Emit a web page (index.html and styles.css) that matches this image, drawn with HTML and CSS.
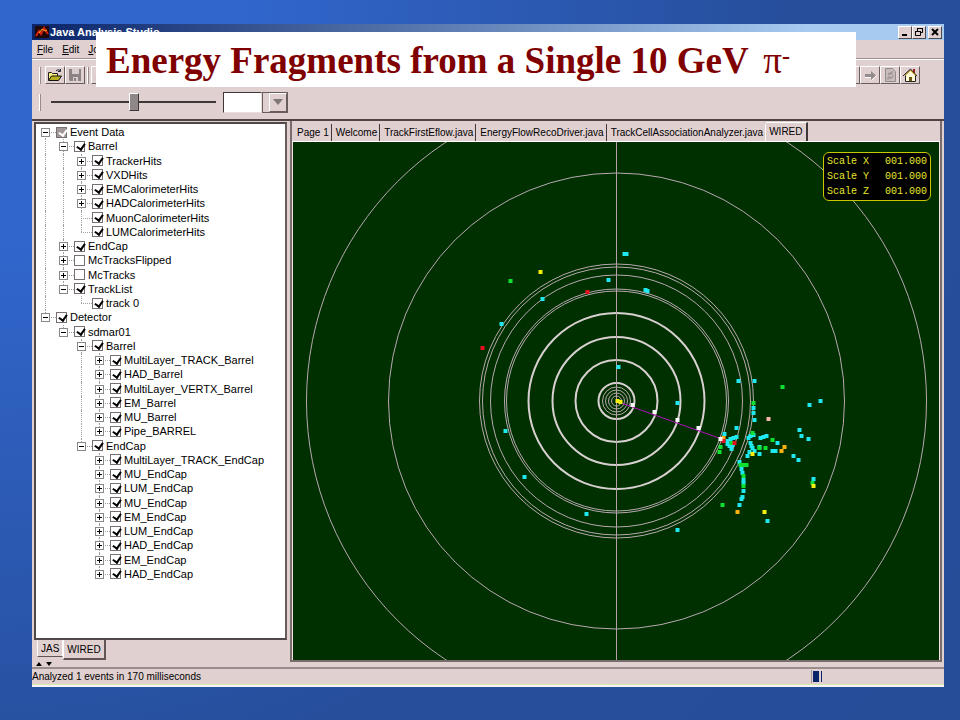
FILE: index.html
```html
<!DOCTYPE html>
<html lang="en">
<head>
  <meta charset="UTF-8">
  <meta name="viewport" content="width=device-width, initial-scale=1.0">
  <title>Energy Fragments from a Single 10 GeV π-</title>
  <link rel="stylesheet" href="styles.css">
</head>
<body>
  <h1 class="banner">Energy Fragments from a Single 10 GeV <span class="pi">π</span><sup>-</sup></h1>

  <main class="window">
    <header class="titlebar">
      <svg class="app-icon" width="14" height="12" viewBox="0 0 14 12">
        <rect width="14" height="12" fill="#200808"/>
        <path d="M1 10L4 5l2 3 3-6 4 6" fill="none" stroke="#d82010" stroke-width="2"/>
        <path d="M4 7l3-4 3 2 2-1" fill="none" stroke="#f0b020"/>
      </svg>
      <span class="title">Java Analysis Studio</span>
      <div class="controls">
        <button aria-label="Minimize"><svg width="10" height="10"><path d="M2 8h5" stroke="#000" stroke-width="2"/></svg></button>
        <button aria-label="Restore"><svg width="10" height="10"><path d="M3.500 4V1.500h5v4H7M3 1.500h6M1.500 4.500h5v4h-5zM1 4.500h6" fill="none" stroke="#000"/></svg></button>
        <button class="close" aria-label="Close"><svg width="10" height="10"><path d="M2 2l6 6M8 2L2 8" stroke="#000" stroke-width="2"/></svg></button>
      </div>
    </header>

    <nav class="menu">
      <a href="#"><u>F</u>ile</a>
      <a href="#"><u>E</u>dit</a>
      <a href="#"><u>J</u>ob</a>
    </nav>

    <div class="toolbar">
      <span class="grip"></span>
      <button class="tool" aria-label="Open">
        <svg width="16" height="14" viewBox="0 0 16 14">
          <path d="M1.500 12V4.500h3l1 1h5V8" fill="#f4f080" stroke="#222"/>
          <path d="M1.500 12.500L4.500 8h10l-3 4.500z" fill="#b8b020" stroke="#111"/>
          <path d="M9 3q2-2.500 4-.5M13.500 1v2.500H11" fill="none" stroke="#223"/>
        </svg>
      </button>
      <button class="tool" aria-label="Save">
        <svg width="16" height="14" viewBox="0 0 16 14">
          <path d="M2 1h12v12H3l-1-1z" fill="#8c8484"/>
          <path d="M5 1h7v5H5zM6 9h5v4H6z" fill="#d8cccc"/>
          <path d="M7 10h2v3H7z" fill="#8c8484"/>
        </svg>
      </button>
      <span class="grip"></span>
      <button class="tool" aria-label="Cut"><svg width="16" height="14"><path d="M3 11l5-9" stroke="#8c8484"/></svg></button>
      <div class="tools-right">
        <button class="tool" aria-label="Back"></button>
        <button class="tool" aria-label="Forward">
          <svg width="16" height="14" viewBox="0 0 16 14">
            <path d="M3 6h6V3l5 4.500L9 12V9H3z" fill="#948c8c"/>
            <path d="M3 9.500h6M9.500 12.500l5-5" stroke="#fff"/>
          </svg>
        </button>
        <button class="tool" aria-label="Reload">
          <svg width="16" height="14" viewBox="0 0 16 14">
            <path d="M3.500.500h7l3 3v10h-10z" fill="#c8bcbc" stroke="#948c8c"/>
            <path d="M6 7q0-3 4-2M11 7q0 4-4 3M10 3v3H7M6 12V9h3" fill="none" stroke="#948c8c"/>
          </svg>
        </button>
        <button class="tool" aria-label="Home">
          <svg width="16" height="14" viewBox="0 0 16 14">
            <path d="M11 1h2v5h-2z" fill="#a02018"/>
            <path d="M3.500 7v6.500h10V7L8.500 2z" fill="#fffbd8" stroke="#222"/>
            <path d="M1 8l7.500-7L15 8" fill="none" stroke="#222" stroke-width="1"/>
            <path d="M3 7.500L8.500 2.500 14 7.500" fill="none" stroke="#e0b020"/>
            <path d="M7 9h3v4H7z" fill="#705818"/>
          </svg>
        </button>
      </div>
    </div>

    <div class="sliderbar">
      <span class="grip"></span>
      <input class="slider" type="range" min="0" max="100" value="50" aria-label="Event position">
      <input class="entry" type="text" aria-label="Event number">
      <div class="combo">
        <button aria-label="Choose event"><svg width="12" height="8"><path d="M1 1h10L6 7z" fill="#807878"/></svg></button>
      </div>
    </div>

    <div class="workspace">
      <section class="side">
        <div class="tree-box">
          <ul class="tree" id="tree"></ul>
        </div>
        <div class="side-tabs">
          <button>JAS</button>
          <button class="active">WIRED</button>
        </div>
      </section>

      <section class="view">
        <div class="tabs">
          <button>Page 1</button>
          <button>Welcome</button>
          <button>TrackFirstEflow.java</button>
          <button>EnergyFlowRecoDriver.java</button>
          <button>TrackCellAssociationAnalyzer.java</button>
          <button class="active">WIRED</button>
        </div>
        <div class="plot">
          <svg class="detector" id="detector" viewBox="-324 -259 647 518" preserveAspectRatio="xMidYMid slice"></svg>
          <dl class="scale">
            <dt>Scale X</dt><dd>001.000</dd>
            <dt>Scale Y</dt><dd>001.000</dd>
            <dt>Scale Z</dt><dd>001.000</dd>
          </dl>
        </div>
      </section>
    </div>

    <div class="split-arrows">
      <svg width="18" height="4"><path d="M2 4l3-4 3 4zM12 0h6l-3 4z"/></svg>
    </div>

    <footer class="status">
      <span>Analyzed 1 events in 170 milliseconds</span>
      <div class="progress"><i></i><i></i></div>
    </footer>
  </main>

  <script src="script.js"></script>
</body>
</html>
```
FILE: styles.css
```css
* {
  box-sizing: border-box;
}

body {
  margin: 0;
  padding: 24px 16px 33px 32px;
  min-height: 100vh;
  display: flex;
  flex-direction: column;
  position: relative;
  background: radial-gradient(circle at 0 0, #3166cc 0, #3166cc 20%, #264e9b 66%, #254d98 100%);
  font-family: "Liberation Sans", Arial, sans-serif;
  font-size: 10px;
  color: #000;
}

button,
input {
  font: inherit;
  color: inherit;
  margin: 0;
  padding: 0;
  border-radius: 0;
}

/* slide heading over the window */
.banner {
  position: absolute;
  z-index: 2;
  top: 32px;
  left: 96px;
  right: 104px;
  height: 55px;
  margin: 0;
  padding-left: 10px;
  background: #fff;
  color: #800000;
  font-family: "Liberation Serif", "Times New Roman", serif;
  font-size: 37px;
  font-weight: bold;
  line-height: 58px;
  white-space: nowrap;
}

.banner .pi {
  margin-left: 6px;
  font-weight: normal;
}

.banner sup {
  font-size: 24px;
  line-height: 0;
  vertical-align: 9px;
}

.window {
  flex: 1;
  display: flex;
  flex-direction: column;
  background: #e0d0d0;
  border-bottom: 2px solid #f4f4f4;
}

.titlebar {
  display: flex;
  align-items: center;
  height: 16px;
  padding: 0 2px 0 3px;
  gap: 1px;
  background: linear-gradient(90deg, #0a246a, #a6caf0 85%);
  color: #fff;
  font-size: 11px;
  font-weight: bold;
}

.controls {
  display: flex;
  margin-left: auto;
}

.controls button {
  display: flex;
  align-items: center;
  justify-content: center;
  width: 14px;
  height: 13px;
  background: #e0d0d0;
  border: 1px solid;
  border-color: #fff #504848 #504848 #fff;
}

.controls .close {
  margin-left: 2px;
}

.menu {
  display: flex;
  gap: 9px;
  height: 19px;
  padding: 0 5px;
  line-height: 20px;
  border-bottom: 1px solid #a09090;
  box-shadow: 0 1px #fff;
}

.menu a {
  color: #000;
  text-decoration: none;
}

.toolbar {
  display: flex;
  align-items: center;
  height: 30px;
  padding: 2px 24px 0 7px;
}

.grip {
  width: 2px;
  height: 17px;
  margin-right: 4px;
  background: #fff;
  border-right: 1px solid #988c8c;
}

.tool {
  display: flex;
  align-items: center;
  justify-content: center;
  width: 20px;
  height: 18px;
  background: #e0d0d0;
  border: 1px solid;
  border-color: #fff #685c5c #685c5c #fff;
}

.tool + .grip {
  margin-left: 2px;
  margin-right: 2px;
}

.tools-right {
  display: flex;
  margin-left: auto;
}

.sliderbar {
  display: flex;
  align-items: center;
  height: 30px;
  padding: 0 0 4px 7px;
}

.slider {
  -webkit-appearance: none;
  appearance: none;
  width: 165px;
  height: 18px;
  margin: 0 7px 0 6px;
  background: linear-gradient(#403838, #403838) center / 100% 2px no-repeat;
}

.slider::-webkit-slider-thumb {
  -webkit-appearance: none;
  width: 10px;
  height: 18px;
  background: #908888;
  border: 1px solid;
  border-color: #fff #403838 #403838 #fff;
}

.entry {
  width: 39px;
  height: 21px;
  background: #fff;
  border: 1px solid;
  border-color: #403838 #e8dcdc #e8dcdc #403838;
}

.combo {
  display: flex;
  justify-content: flex-end;
  width: 26px;
  height: 21px;
  border: 1px solid #685c5c;
}

.combo button {
  display: flex;
  align-items: center;
  justify-content: center;
  width: 18px;
  background: #e0d0d0;
  border: 1px solid;
  border-color: #fff #685c5c #685c5c #fff;
}

.workspace {
  flex: 1;
  display: flex;
  gap: 3px;
  border-top: 2px solid #504444;
  min-height: 0;
}

/* left panel */
.side {
  width: 255px;
  flex: none;
  display: flex;
  flex-direction: column;
  padding-left: 2px;
}

.tree-box {
  flex: 1;
  margin-top: 1px;
  background: #fff;
  border: 2px solid #504848;
  border-right-color: #685c5c;
}

.tree {
  display: grid;
  grid-auto-rows: 1fr;
  height: 457px;
  margin: 0;
  padding: 1px 0 0;
  list-style: none;
  font-size: 11px;
}

.tree li {
  display: flex;
  min-height: 0;
}

/* connector cells, one for each level */
.guide {
  position: relative;
  width: 18px;
  flex: none;
}

.guide.line::before {
  content: "";
  position: absolute;
  top: 0;
  bottom: 0;
  left: 9px;
  border-left: 1px dotted #a0a0a0;
}

.guide.last::before {
  bottom: 50%;
}

.guide.first::before {
  top: 50%;
}

.guide.node::after {
  content: "";
  position: absolute;
  top: 7px;
  left: 9px;
  right: -2px;
  border-top: 1px dotted #a0a0a0;
}

.expander {
  position: absolute;
  z-index: 1;
  top: 3px;
  left: 5px;
  width: 9px;
  height: 9px;
  background: #fff;
  border: 1px solid #888;
}

.expander::before,
.expander::after {
  content: "";
  position: absolute;
  background: #000;
}

.expander::before {
  top: 3px;
  left: 1px;
  width: 5px;
  height: 1px;
}

.expander.closed::after {
  top: 1px;
  left: 3px;
  width: 1px;
  height: 5px;
}

.tree label {
  display: flex;
  align-items: center;
  gap: 3px;
  padding-left: 2px;
  white-space: nowrap;
}

.tree input {
  -webkit-appearance: none;
  appearance: none;
  width: 11px;
  height: 11px;
  border: 1px solid #787070;
  background: #fff;
}

.tree input:checked::before {
  content: "";
  display: block;
  width: 4px;
  height: 6px;
  margin: 0 0 0 3px;
  border: solid #000;
  border-width: 0 2px 2px 0;
  transform: rotate(35deg);
}

.tree input.mixed {
  background: #a09898;
}

.tree input.mixed::before {
  border-color: #fff;
}

.side-tabs {
  display: flex;
  align-items: flex-start;
  height: 22px;
  padding-left: 3px;
}

.side-tabs button {
  height: 17px;
  padding: 0 3px;
  background: #e0d0d0;
  border: 1px solid;
  border-color: transparent #fff #605454 #fff;
}

.side-tabs .active {
  height: 20px;
  padding: 0 3px;
  border-width: 0 2px 2px 1px;
  border-color: #605454 #605454 #605454 #fff;
}

/* right panel */
.view {
  flex: 1;
  min-width: 0;
  display: flex;
  flex-direction: column;
  margin-right: 2px;
  border: 1px solid #786c6c;
  border-width: 0 2px 2px;
}

.tabs {
  display: flex;
  align-items: flex-end;
  height: 21px;
  padding-left: 1px;
  border-bottom: 1px solid #fff;
}

.tabs button {
  height: 17px;
  padding: 0 2px 0 4px;
  background: #e0d0d0;
  border: solid #403838;
  border-width: 0 1px 0 0;
  white-space: nowrap;
}

.tabs button:nth-last-child(2) {
  border-color: #fff;
}

.tabs .active {
  height: 19px;
  padding: 0 3px 2px;
  border-top: 1px solid #fff;
  border-right-width: 2px;
}

.plot {
  flex: 1;
  position: relative;
  min-height: 0;
  border: solid #f0e4e4;
  border-width: 0 1px;
  background: #003000;
  overflow: hidden;
}

.detector {
  position: absolute;
  width: 100%;
  height: 100%;
}

.ring {
  fill: none;
  stroke: #b8a8b0;
}

.ring.bold {
  stroke: #d8d0d0;
  stroke-width: 2;
}

.axis {
  stroke: #b8a0a8;
  shape-rendering: crispEdges;
}

.track {
  stroke: #b010b8;
}

.scale {
  position: absolute;
  top: 10px;
  right: 8px;
  width: 108px;
  display: grid;
  grid-template-columns: auto auto;
  justify-content: space-between;
  margin: 0;
  padding: 1px 3px;
  background: #000;
  border: 1px solid #c8c800;
  border-radius: 6px;
  color: #e8e830;
  font-family: "Liberation Mono", "Courier New", monospace;
  font-size: 10px;
  line-height: 15px;
}

.scale dd {
  margin: 0;
}

.split-arrows {
  display: flex;
  height: 5px;
  padding-left: 2px;
}

.status {
  display: flex;
  align-items: center;
  height: 18px;
  border-top: 2px solid #988c8c;
  border-bottom: 1px solid #d8e8b0;
}

.progress {
  display: flex;
  gap: 2px;
  width: 133px;
  height: 13px;
  margin-left: auto;
  padding: 1px;
  border-left: 1px solid #a09898;
}

.progress i {
  width: 6px;
  background: #0a246a;
}

.progress i + i {
  width: 1px;
}
```
FILE: script.js
```js
// depth, state (+ closed, - open, . leaf), label, checked
const rows = [
  [0, "-", "Event Data", "mixed"],
  [1, "-", "Barrel", true],
  [2, "+", "TrackerHits", true],
  [2, "+", "VXDHits", true],
  [2, "+", "EMCalorimeterHits", true],
  [2, "+", "HADCalorimeterHits", true],
  [2, ".", "MuonCalorimeterHits", true],
  [2, ".", "LUMCalorimeterHits", true],
  [1, "+", "EndCap", true],
  [1, "+", "McTracksFlipped", false],
  [1, "+", "McTracks", false],
  [1, "-", "TrackList", true],
  [2, ".", "track 0", true],
  [0, "-", "Detector", true],
  [1, "-", "sdmar01", true],
  [2, "-", "Barrel", true],
  [3, "+", "MultiLayer_TRACK_Barrel", true],
  [3, "+", "HAD_Barrel", true],
  [3, "+", "MultiLayer_VERTX_Barrel", true],
  [3, "+", "EM_Barrel", true],
  [3, "+", "MU_Barrel", true],
  [3, "+", "Pipe_BARREL", true],
  [2, "-", "EndCap", true],
  [3, "+", "MultiLayer_TRACK_EndCap", true],
  [3, "+", "MU_EndCap", true],
  [3, "+", "LUM_EndCap", true],
  [3, "+", "MU_EndCap", true],
  [3, "+", "EM_EndCap", true],
  [3, "+", "LUM_EndCap", true],
  [3, "+", "HAD_EndCap", true],
  [3, "+", "EM_EndCap", true],
  [3, "+", "HAD_EndCap", true]
];

// is there a later row on this level before the branch closes?
function continues(index, level) {
  for (let i = index + 1; i < rows.length; i++) {
    if (rows[i][0] < level) return false;
    if (rows[i][0] === level) return true;
  }
  return false;
}

const tree = document.getElementById("tree");
rows.forEach(([depth, state, text, checked], index) => {
  const li = document.createElement("li");
  let html = "";
  for (let level = 0; level < depth; level++) {
    html += `<span class="guide ${continues(index, level) ? "line" : ""}"></span>`;
  }
  const last = continues(index, depth) ? "" : "last";
  const first = index === 0 ? "first" : "";
  const box = state === "." ? "" : `<span class="expander ${state === "+" ? "closed" : ""}"></span>`;
  html += `<span class="guide node line ${last} ${first}">${box}</span>`;
  html += `<label><input type="checkbox" class="${checked === "mixed" ? "mixed" : ""}" ${checked ? "checked" : ""}>${text}</label>`;
  li.innerHTML = html;
  tree.appendChild(li);
});

// detector drawing, origin at the beam
const rings = [310, 228, 137, 134, 126, 112, 110, 14, 11, 8, 5];
const boldRings = [88, 64, 41, 18];

const hits = {
  "#20e8f0": [
    [8, -147], [10, -147], [-74, -102], [-8, -121], [-115, -77], [2, -34], [-111, 30], [29, -111], [31, -110],
    [-92, 76], [-30, 113], [61, 129], [61, 2], [122, -20], [138, -20], [193, 4], [204, 0], [137, 7], [137, 12],
    [138, 19], [120, 27], [183, 29], [185, 35], [192, 38], [177, 55], [182, 59], [161, 42], [150, 35], [147, 36],
    [144, 37], [143, 46], [143, 53], [156, 50], [159, 50], [137, 34], [134, 35], [132, 37], [134, 42], [135, 45],
    [136, 47], [138, 50], [133, 51], [131, 55], [123, 61], [125, 68], [126, 72], [127, 79], [127, 82], [127, 90],
    [126, 96], [125, 98], [123, 104], [151, 120], [197, 78], [108, 33], [111, 40], [114, 38], [117, 37], [120, 36],
    [111, 43], [113, 45], [115, 48], [116, 44]
  ],
  "#10e030": [
    [-106, -120], [166, -14], [137, 2], [156, 39], [149, 47], [143, 47], [136, 32], [124, 64], [127, 64],
    [130, 64], [127, 75], [127, 85], [106, 104], [196, 82], [115, 42], [104, 46], [103, 51]
  ],
  "#f8f010": [[-76, -129], [1, 0], [4, 1], [136, 53], [148, 111], [197, 85]],
  "#ffb010": [[168, 46], [165, 50], [121, 111], [107, 37]],
  "#e81020": [[-29, -109], [-134, -53], [107, 40], [118, 42]],
  "#f8b8a8": [[152, 18]],
  "#ffffff": [[16, 4], [38, 11], [61, 19], [82, 27], [104, 38]]
};

let drawing = "";
rings.forEach(r => drawing += `<circle class="ring" r="${r}"/>`);
boldRings.forEach(r => drawing += `<circle class="ring bold" r="${r}"/>`);
drawing += `<line class="axis" x1="0" x2="0" y1="-400" y2="400"/>`;
drawing += `<line class="track" x1="2" y1="1" x2="105" y2="38"/>`;
for (const color in hits) {
  hits[color].forEach(([x, y]) => {
    drawing += `<rect x="${x - 2}" y="${y - 2}" width="4" height="4" fill="${color}"/>`;
  });
}
document.getElementById("detector").innerHTML = drawing;
```
